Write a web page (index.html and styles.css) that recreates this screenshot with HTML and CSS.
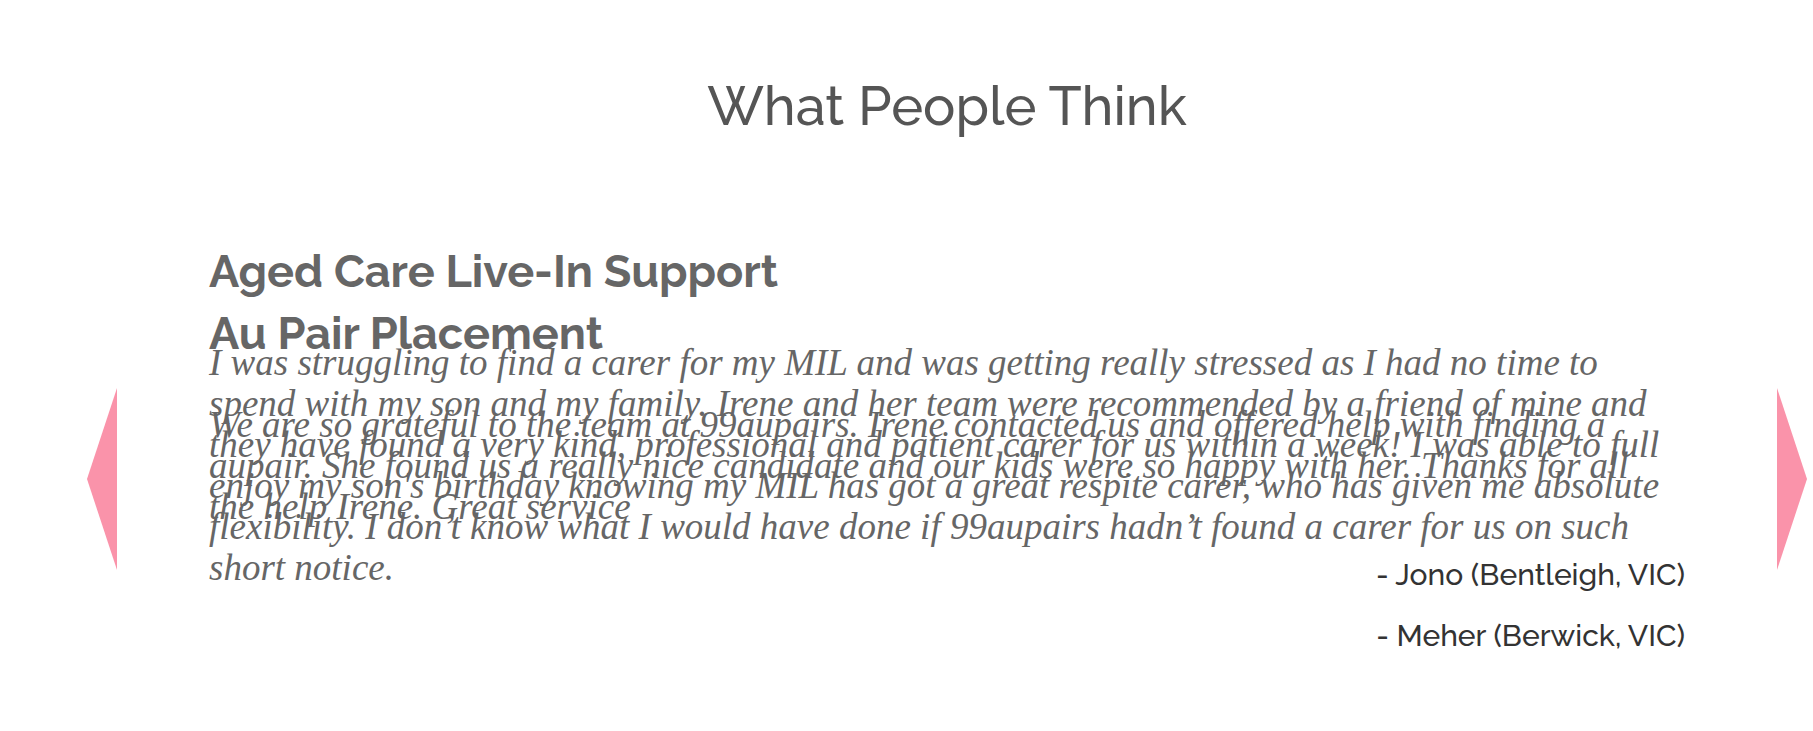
FILE: index.html
```html
<!DOCTYPE html>
<html lang="en">
<head>
<meta charset="utf-8">
<title>What People Think</title>
<link rel="stylesheet" href="styles.css">
</head>
<body>
<section class="testimonials">
  <h2 class="title">What People Think</h2>
  <div class="carousel">
    <button class="arrow" type="button" aria-label="Previous testimonial">
      <svg class="arrow-icon" viewBox="0 0 30 182" aria-hidden="true"><path d="M30 0V182L0 91Z"/></svg>
    </button>
    <div class="slides">
      <article class="slide">
        <h3 class="service">Aged Care Live-In Support</h3>
        <blockquote class="quote">I was struggling to find a carer for my MIL and was getting really stressed as I had no time to spend with my son and my family. Irene and her team were recommended by a friend of mine and they have found a very kind, professional and patient carer for us within a week! I was able to full enjoy my son's birthday knowing my MIL has got a great respite carer, who has given me absolute flexibility. I don’t know what I would have done if 99aupairs hadn’t found a carer for us on such short notice.</blockquote>
        <p class="author">- Meher (Berwick, VIC)</p>
      </article>
      <article class="slide slide-next">
        <h3 class="service">Au Pair Placement</h3>
        <blockquote class="quote">We are so grateful to the team at 99aupairs. Irene contacted us and offered help with finding a aupair. She found us a really nice candidate and our kids were so happy with her. Thanks for all the help Irene. Great service</blockquote>
        <p class="author">- Jono (Bentleigh, VIC)</p>
      </article>
    </div>
    <button class="arrow" type="button" aria-label="Next testimonial">
      <svg class="arrow-icon" viewBox="0 0 30 182" aria-hidden="true"><path d="M0 0V182L30 91Z"/></svg>
    </button>
  </div>
</section>
</body>
</html>
```

FILE: styles.css
```css
body {
  margin: 0;
  background: #fff;
  font-family: Raleway, Lato, "Open Sans", sans-serif;
}

.testimonials {
  padding: 72px 6px 8px 87px;
}

.title {
  margin: 0 0 104px;
  color: #555;
  font-size: 54px;
  font-weight: 500;
  line-height: 68px;
  text-align: center;
}

.carousel {
  display: flex;
  align-items: center;
}

.arrow {
  flex: none;
  padding: 0;
  border: 0;
  background: none;
  cursor: pointer;
}

.arrow-icon {
  display: block;
  width: 30px;
  height: 182px;
  fill: #fa93aa;
}

.slides {
  display: grid;
  flex: 1;
  padding: 0 92px 58px;
}

.slide {
  grid-area: 1 / 1;
}

.slide-next {
  padding-top: 62px;
}

.service {
  margin: 0 0 42px;
  color: #666;
  font-size: 45px;
  font-weight: 700;
  line-height: 56px;
}

.quote {
  margin: 0;
  padding-right: 16px;
  color: #666;
  font-family: "Liberation Serif", serif;
  font-size: 37px;
  font-style: italic;
  line-height: 41px;
}

.author {
  margin: 28px 0 0;
  color: #333;
  font-size: 30px;
  font-weight: 500;
  line-height: 40px;
  text-align: right;
}
```
